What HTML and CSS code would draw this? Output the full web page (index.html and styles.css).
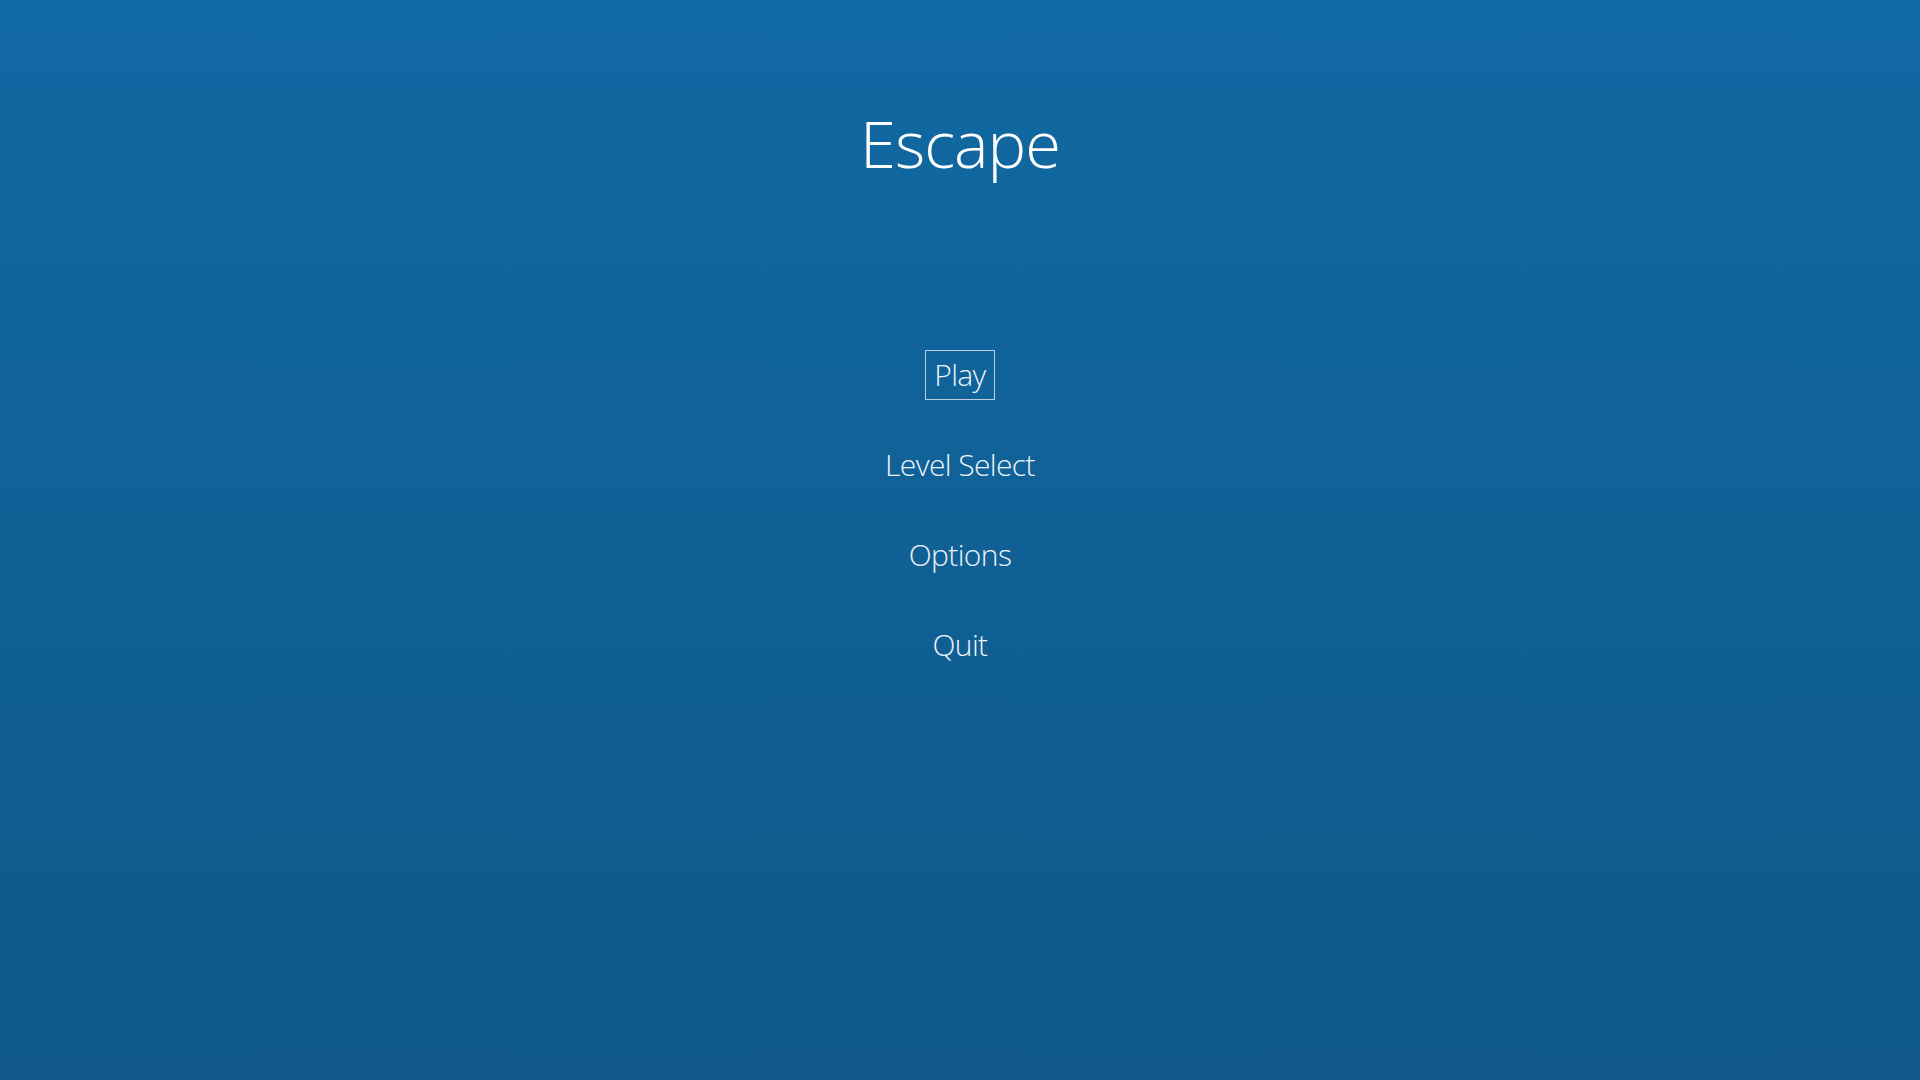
FILE: index.html
```html
<!DOCTYPE html>
<html lang="en">
<head>
<meta charset="utf-8">
<title>Escape</title>
<link rel="stylesheet" href="styles.css">
</head>
<body>
<main class="screen">
  <h1 class="title">Escape</h1>
  <nav class="menu">
    <a class="menu-item selected">Play</a>
    <a class="menu-item">Level Select</a>
    <a class="menu-item">Options</a>
    <a class="menu-item">Quit</a>
  </nav>
</main>
</body>
</html>
```
FILE: styles.css
```css
html, body {
  margin: 0;
  padding: 0;
  height: 100%;
}
body {
  background: linear-gradient(to bottom, #1169a3 0%, #0f5889 100%);
  font-family: "Open Sans", "Noto Sans", sans-serif;
  font-weight: 300;
  color: #ffffff;
}
.screen {
  height: 100%;
  display: flex;
  flex-direction: column;
  align-items: center;
}
.title {
  margin: 0;
  padding-top: 101px;
  font-size: 65px;
  font-weight: 300;
  line-height: 84px;
  letter-spacing: -1px;
}
.menu {
  display: flex;
  flex-direction: column;
  align-items: center;
  gap: 40px;
  margin-top: 165px;
}
.menu-item {
  display: block;
  height: 48px;
  line-height: 47px;
  padding: 0 8px;
  font-size: 30px;
  color: #eef3f8;
  border: 1px solid transparent;
  letter-spacing: -0.6px;
}
.menu-item.selected {
  border-color: #b9cfe0;
}
```
